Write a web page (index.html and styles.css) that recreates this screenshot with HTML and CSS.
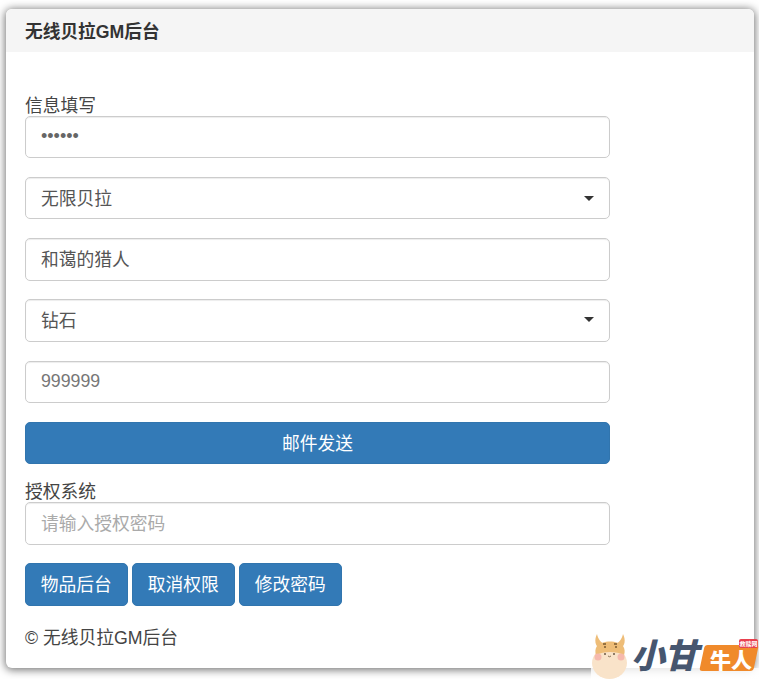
FILE: index.html
```html
<!DOCTYPE html>
<html lang="zh">
<head>
<meta charset="utf-8">
<title>无线贝拉GM后台</title>
<link rel="stylesheet" href="styles.css">
</head>
<body>
<div class="panel">
  <div class="panel-heading">无线贝拉GM后台</div>
  <div class="panel-body">
    <div class="form-area">
      <label class="label first">信息填写</label>
      <div class="control"><span class="dots">••••••</span></div>
      <div class="control select"><span>无限贝拉</span><i class="caret"></i></div>
      <div class="control tall tight"><span>和蔼的猎人</span></div>
      <div class="control select tall"><span>钻石</span><i class="caret"></i></div>
      <div class="control"><span class="num">999999</span></div>
      <div class="btn block">邮件发送</div>
      <label class="label">授权系统</label>
      <div class="control tall tight"><span class="placeholder">请输入授权密码</span></div>
    </div>
    <div class="btn-row">
      <div class="btn">物品后台</div>
      <div class="btn">取消权限</div>
      <div class="btn">修改密码</div>
    </div>
    <p class="copy">© 无线贝拉GM后台</p>
  </div>
</div>
<div class="logo">
  <svg class="cow" width="38" height="49" viewBox="0 0 38 49">
    <path d="M5 4 C2 10 3 16 8 19 L13 14 C9 13 6 9 5 4Z" fill="#eebd78"/>
    <path d="M31 4 C34 10 33 16 28 19 L23 14 C27 13 30 9 31 4Z" fill="#eebd78"/>
    <ellipse cx="17.5" cy="33" rx="17.5" ry="16" fill="#f9e3c9"/>
    <path d="M5 16 C10 10 26 10 31 16 C33 19 33 22 32 25 C24 21 12 21 4 25 C3 22 3 19 5 16Z" fill="#eebd78"/>
    <circle cx="6" cy="27" r="3.5" fill="#f6b9ad"/>
    <circle cx="29" cy="27" r="3.5" fill="#f6b9ad"/>
    <circle cx="13" cy="24" r="1" fill="#6b5a45"/>
    <circle cx="22" cy="24" r="1" fill="#6b5a45"/>
    <path d="M16 26 Q17.5 27.5 19 26" stroke="#8a7358" fill="none"/>
    <path d="M11 14 h3 M22 14 h3 M12 17 h2 M23 17 h2" stroke="#7a5a30" stroke-width="1.4"/>
  </svg>
  <span class="logo-name">小甘</span>
  <div class="logo-badge"></div>
  <span class="logo-badge-text">牛人</span>
  <span class="logo-tag">救赎网</span>
</div>
</body>
</html>
```

FILE: styles.css
```css
html, body {
  margin: 0;
  padding: 0;
  background: #fff;
  height: 679px;
  overflow: hidden;
}
body {
  padding: 9px 5px 0 6px;
  box-sizing: border-box;
  font-family: "Liberation Sans", "Noto Sans CJK SC", sans-serif;
  font-size: 17.75px;
  color: #333;
}
.panel {
  height: 659px;
  box-sizing: border-box;
  background: #fff;
  border-radius: 6px;
  box-shadow: 0 1px 8px 1px rgba(0,0,0,.55);
  overflow: hidden;
}
.panel-heading {
  height: 43px;
  background: #f5f5f5;
  padding-left: 19px;
  font-size: 17.7px;
  font-weight: 700;
  line-height: 46px;
  color: #333;
}
.panel-body {
  padding: 42px 19px 0;
}
.form-area {
  width: 585px;
}
.label {
  display: block;
  height: 22px;
  line-height: 24px;
  color: #444;
}
.label:not(.first) {
  height: 20px;
  line-height: 21px;
}
.control {
  height: 42px;
  box-sizing: border-box;
  border: 1px solid #ccc;
  border-radius: 5px;
  padding: 0 15px 2px;
  margin-bottom: 19px;
  display: flex;
  align-items: center;
  justify-content: space-between;
  color: #555;
  box-shadow: inset 0 1px 1px rgba(0,0,0,.075);
}
.control.tall { height: 43px; padding-bottom: 4px; }
.control.tight { margin-bottom: 18px; }
.dots {
  font-family: "Liberation Sans", sans-serif;
  font-size: 18px;
  line-height: 20px;
  color: #666;
}
.num { color: #777; }
.placeholder { color: #aaa; }
.caret {
  width: 0;
  height: 0;
  border-left: 5px solid transparent;
  border-right: 5px solid transparent;
  border-top: 5px solid #333;
  position: relative;
  top: 1px;
}
.btn {
  height: 43px;
  box-sizing: border-box;
  background: #337ab7;
  border: 1px solid #3175ae;
  border-radius: 5px;
  color: #fff;
  padding: 0 14.75px 4px;
  display: flex;
  align-items: center;
  justify-content: center;
}
.btn.block {
  height: 42px;
  margin-bottom: 18px;
  padding-bottom: 2px;
}
.btn-row {
  display: flex;
  gap: 4.5px;
}
.copy {
  margin: 21px 0 0;
  line-height: 22px;
  color: #444;
}
.logo {
  position: absolute;
  left: 591px;
  top: 630px;
  width: 168px;
  height: 49px;
  background: linear-gradient(to bottom, transparent 0 38px, rgba(255,255,255,.8) 38px);
}
.cow {
  position: absolute;
  left: 1px;
  top: 0;
}
.logo-name {
  position: absolute;
  left: 40px;
  top: 6px;
  font-family: "Noto Sans CJK SC", sans-serif;
  font-size: 34px;
  font-weight: 900;
  font-style: italic;
  letter-spacing: -1px;
  color: #46566f;
  line-height: 36px;
}
.logo-badge {
  position: absolute;
  left: 111px;
  top: 15px;
  width: 54px;
  height: 26px;
  background: #f08a2b;
  border-radius: 3px;
  transform: skewX(-12deg);
}
.logo-badge-text {
  position: absolute;
  left: 119px;
  top: 19px;
  display: block;
  height: 21px;
  color: #fff;
  font-family: "Noto Sans CJK SC", sans-serif;
  font-size: 21px;
  font-weight: 900;
  line-height: 21px;
}
.logo-tag {
  position: absolute;
  right: 1px;
  top: 9px;
  display: block;
  width: 19px;
  height: 9px;
  background: #e8414f;
  border-radius: 2px;
  font-family: "Noto Sans CJK SC", sans-serif;
  font-size: 6px;
  font-weight: 700;
  line-height: 9px;
  text-align: center;
  color: #fff;
}
```
